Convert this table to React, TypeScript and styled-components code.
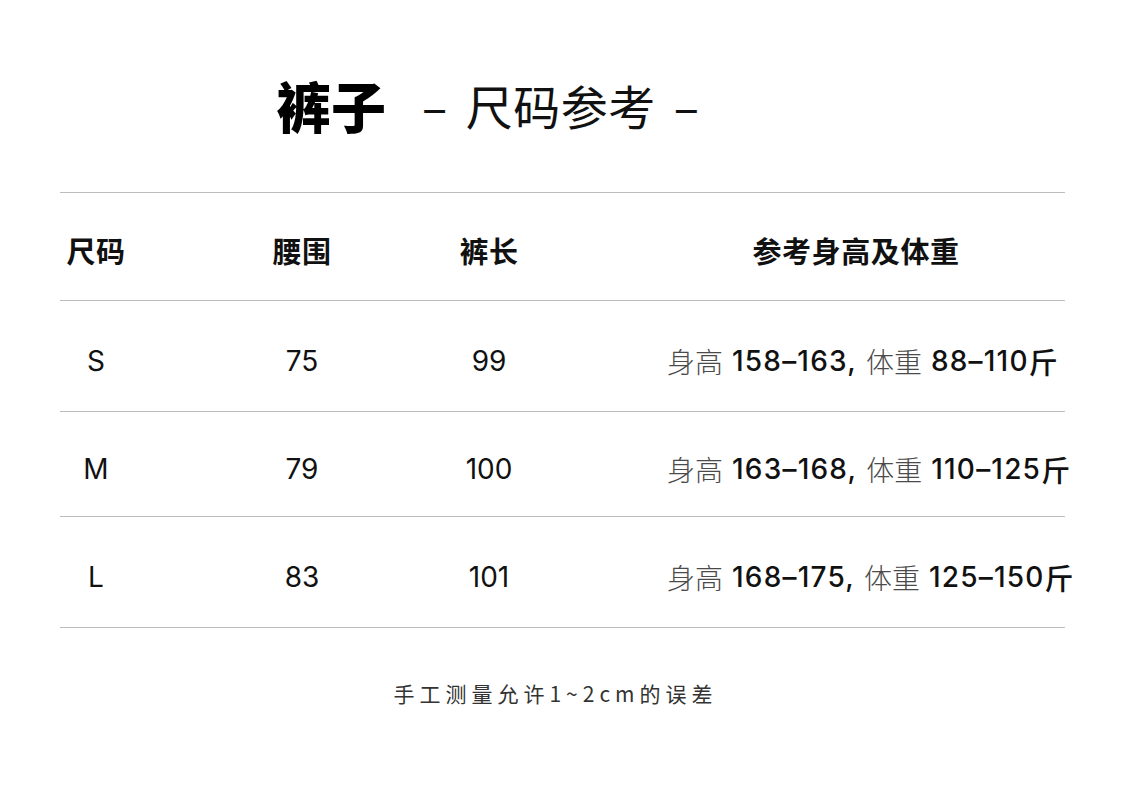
import React from "react";
import styled, { createGlobalStyle } from "styled-components";

const GlobalStyle = createGlobalStyle`
  html, body {
    margin: 0;
    padding: 0;
    background: #ffffff;
  }
  body {
    font-family: "Noto Sans CJK SC", "Noto Sans", "Liberation Sans", sans-serif;
    color: #111;
  }
`;

type Row = { size: string; waist: string; length: string; height: string; weight: string };

const rows: Row[] = [
  { size: "S", waist: "75", length: "99", height: "158–163", weight: "88–110" },
  { size: "M", waist: "79", length: "100", height: "163–168", weight: "110–125" },
  { size: "L", waist: "83", length: "101", height: "168–175", weight: "125–150" },
];

// padding-right per column so the text centre lands where it does in the picture
const colPad = ["100px", "47px", "108px", "20px"];

const App = () => {
  return (
    <>
      <GlobalStyle />
      <Page>
        <TitleBar>
          <MainTitle>裤子</MainTitle>
          <SubTitle>
            <Dash>–</Dash>尺码参考<Dash>–</Dash>
          </SubTitle>
        </TitleBar>

        <Table>
          <HeadCell pad={colPad[0]}>尺码</HeadCell>
          <HeadCell pad={colPad[1]}>腰围</HeadCell>
          <HeadCell pad={colPad[2]}>裤长</HeadCell>
          <HeadCell pad={colPad[3]}>参考身高及体重</HeadCell>

          {rows.map((r) => (
            <React.Fragment key={r.size}>
              <Cell pad={colPad[0]}>{r.size}</Cell>
              <Cell pad={colPad[1]}>{r.waist}</Cell>
              <Cell pad={colPad[2]}>{r.length}</Cell>
              <RefCell>
                <Light>身高</Light>
                <Num gap="9px">{r.height},</Num>
                <Light>体重</Light>
                <Num gap="0">{r.weight}</Num>
                <Unit>斤</Unit>
              </RefCell>
            </React.Fragment>
          ))}
        </Table>

        <Note>手工测量允许1~2cm的误差</Note>
      </Page>
    </>
  );
};

const Page = styled.div`
  width: 1125px;
  height: 798px;
  background: #fff;
  display: flex;
  flex-direction: column;
`;

const TitleBar = styled.div`
  display: flex;
  align-items: center;
  padding-left: 276px;
  padding-top: 74px;
  height: 60px;
  margin-bottom: 58px;
`;

const MainTitle = styled.span`
  font-size: 55px;
  font-weight: 900;
  line-height: 1;
  color: #000;
`;

const SubTitle = styled.span`
  display: flex;
  align-items: center;
  font-size: 47px;
  font-weight: 400;
  line-height: 1;
  color: #111;
  margin-left: 36px;
  letter-spacing: 0.5px;
`;

const Dash = styled.span`
  margin: 0 18px;
  &:first-child {
    margin-left: 0;
  }
`;

const Table = styled.div`
  margin-left: 60px;
  width: 1005px;
  display: grid;
  grid-template-columns: 172px 187px 248px minmax(0, 1fr);
  grid-template-rows: 108px 111px 105px 111px;
  border-top: 1px solid #bdbdbd;

  & > * {
    border-bottom: 1px solid #bdbdbd;
  }
`;

const HeadCell = styled.div<{ pad: string }>`
  display: flex;
  align-items: center;
  justify-content: center;
  padding-right: ${({ pad }) => pad};
  padding-top: 6px;
  font-size: 29px;
  font-weight: 700;
  letter-spacing: 0.6px;
  color: #111;
  white-space: nowrap;
`;

const Cell = styled.div<{ pad: string }>`
  display: flex;
  align-items: center;
  justify-content: center;
  padding-right: ${({ pad }) => pad};
  padding-top: 10px;
  font-family: "Inter", "Noto Sans", sans-serif;
  font-size: 28px;
  font-weight: 400;
  color: #111;
`;

const RefCell = styled.div`
  display: flex;
  align-items: center;
  min-width: 0;
  overflow: visible;
  padding-top: 10px;
  font-size: 28px;
  white-space: nowrap;
`;

const Light = styled.span`
  font-weight: 300;
  color: #4a4a4a;
  margin-right: 9px;
`;

const Num = styled.span<{ gap: string }>`
  font-family: "Inter", "Noto Sans CJK SC", sans-serif;
  font-weight: 500;
  color: #111;
  letter-spacing: 1.2px;
  margin-right: ${({ gap }) => gap};
`;

const Unit = styled.span`
  font-weight: 500;
  font-size: 29px;
  color: #111;
`;

const Note = styled.div`
  margin-top: 50px;
  text-align: center;
  padding-right: 14px;
  font-size: 21px;
  letter-spacing: 5px;
  color: #333;
`;

export default App;
